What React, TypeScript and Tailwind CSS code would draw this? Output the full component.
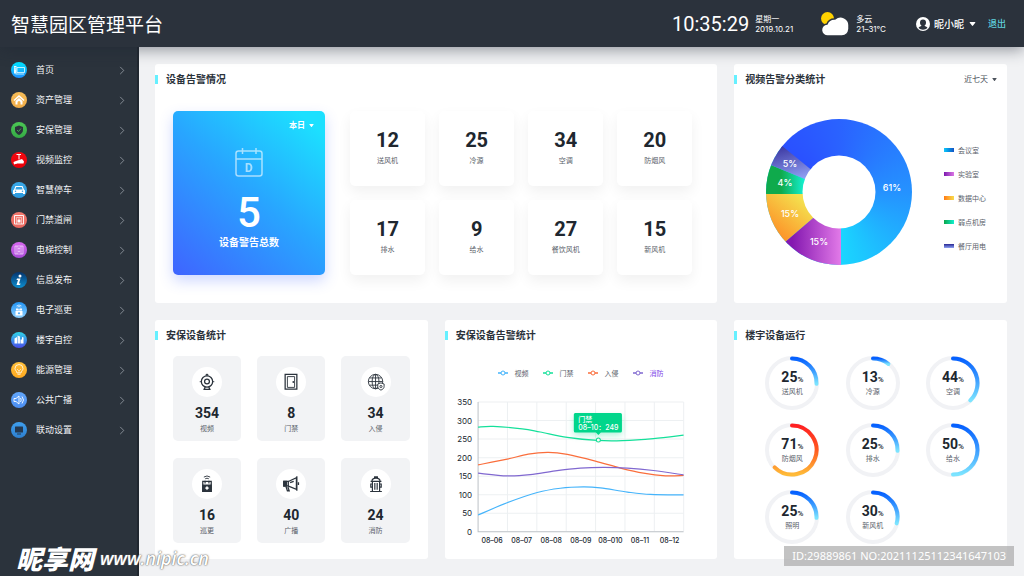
import React from "react";

type Point = [number, number];

// Rounded badge behind every sidebar glyph
function Badge({ id, from, to, children }: { id: string; from: string; to: string; children: React.ReactNode }) {
  return (
    <svg viewBox="0 0 32 32" className="size-4 shrink-0" aria-hidden="true">
      <defs>
        <linearGradient id={`badge-${id}`} x1="0" y1="0" x2="0" y2="1">
          <stop offset="0" stopColor={from} />
          <stop offset="1" stopColor={to} />
        </linearGradient>
      </defs>
      <circle cx="16" cy="16" r="16" fill={`url(#badge-${id})`} />
      {children}
    </svg>
  );
}

const menu = [
  {
    id: "home",
    label: "首页",
    from: "#00e5ff",
    to: "#1f8fff",
    icon: (
      <g fill="none" stroke="#e6fbff" strokeWidth="1.6">
        <path d="M12 11h15v10H12z" />
        <path d="M6 8h5v15H6z" fill="#e6fbff" stroke="none" />
        <path d="M7 11h3M7 14h3" stroke="#19c0ff" strokeWidth="1" />
        <path d="M9 24h17" />
      </g>
    ),
  },
  {
    id: "asset",
    label: "资产管理",
    from: "#f7bd58",
    to: "#f0ac48",
    icon: (
      <g fill="#fff">
        <path d="M16 6 5 16l2 2 9-8 9 8 2-2z" />
        <path d="M9 18l7-6 7 6v7h-4v-4a3 3 0 0 0-6 0v4H9z" />
      </g>
    ),
  },
  {
    id: "security",
    label: "安保管理",
    from: "#4cc755",
    to: "#35ab45",
    icon: (
      <g>
        <path d="M16 7l8 3v6c0 5-4 8-8 10-4-2-8-5-8-10v-6z" fill="#2b333c" />
        <path d="M12 16l3 3 5-6" fill="none" stroke="#4cc755" strokeWidth="1.6" />
      </g>
    ),
  },
  {
    id: "video",
    label: "视频监控",
    from: "#f40a12",
    to: "#e80009",
    icon: (
      <g fill="#fff">
        <path d="M11 4h9v2h-3v9h-2V6h-4z" />
        <path d="M10 18l12-4 4 5-1 4H10z" />
        <path d="M5 20l5-2 2 5-6 2z" />
      </g>
    ),
  },
  {
    id: "parking",
    label: "智慧停车",
    from: "#3aa9e8",
    to: "#2c98dc",
    icon: (
      <g>
        <path d="M9 8h14l3 7 2 2v7h-4v-2H8v2H4v-7l2-2z" fill="#fff" />
        <path d="M10.500 10h11l2 5h-15z" fill="#35a3e3" />
        <circle cx="9" cy="18.500" r="1.500" fill="#35a3e3" />
        <circle cx="23" cy="18.500" r="1.500" fill="#35a3e3" />
      </g>
    ),
  },
  {
    id: "gate",
    label: "门禁道闸",
    from: "#f2786d",
    to: "#e9685f",
    icon: (
      <g fill="none" stroke="#fff" strokeWidth="1.8">
        <path d="M7 7h18v17H7z" />
        <path d="M11 24V11h10v13" strokeWidth="1" />
        <path d="M13 16h6v5h-6z" fill="#fff" stroke="none" />
        <path d="M14.500 16v-2h3v2" strokeWidth="1.200" />
      </g>
    ),
  },
  {
    id: "lift",
    label: "电梯控制",
    from: "#d768ef",
    to: "#a84bd6",
    icon: (
      <g fill="none" stroke="#f5dcff" strokeWidth="1.5">
        <path d="M8 8h16v16H8zM12 8v16M20 8v16" />
        <path d="M14 14l2-3 2 3zM14 18l2 3 2-3z" />
      </g>
    ),
  },
  {
    id: "info",
    label: "信息发布",
    from: "#06356e",
    to: "#0d8fd0",
    icon: (
      <g fill="#fff">
        <circle cx="18" cy="8" r="3" />
        <path d="M12 13h7l-3 10h3l-1 3h-7l3-10h-3z" />
      </g>
    ),
  },
  {
    id: "patrol",
    label: "电子巡更",
    from: "#2194f3",
    to: "#8fd0ff",
    icon: (
      <g>
        <path d="M11 8q5-4 10 0M13 10q3-2 6 0" fill="none" stroke="#fff" strokeWidth="1.4" />
        <path d="M10 13h12v4H10zM9 18h14v9H9z" fill="#fff" />
        <path d="M15 12v3h2v-3zM16 20l2.500 2.500L16 25l-2.500-2.500z" fill="#45a6f6" />
      </g>
    ),
  },
  {
    id: "building",
    label: "楼宇自控",
    from: "#2fd6e8",
    to: "#4a4be8",
    icon: (
      <g fill="#fff">
        <path d="M7 13l5-3v13H7z" />
        <path d="M13 7l5 2v14h-5z" opacity=".9" />
        <path d="M19 15h3v8h-3z" />
        <path d="M22 10l3 1v12h-3z" />
      </g>
    ),
  },
  {
    id: "energy",
    label: "能源管理",
    from: "#ffc03c",
    to: "#ffa91f",
    icon: (
      <g fill="none" stroke="#fff" strokeWidth="1.6">
        <path d="M12 22c0-4-4-5-4-9a8 8 0 0 1 16 0c0 4-4 5-4 9z" />
        <path d="M12 14l4 4 4-4M16 18v4M13 25h6" strokeWidth="1.200" />
      </g>
    ),
  },
  {
    id: "radio",
    label: "公共广播",
    from: "#62a6fa",
    to: "#4a8df0",
    icon: (
      <g fill="none" stroke="#fff" strokeWidth="1.8">
        <path d="M6 13h4l6-5v16l-6-5H6z" />
        <path d="M19 12q3 4 0 8M22 9q6 7 0 14" />
      </g>
    ),
  },
  {
    id: "linkage",
    label: "联动设置",
    from: "#3f9fee",
    to: "#2d7fcf",
    icon: (
      <g fill="#25384f">
        <rect x="8" y="9" width="16" height="12" rx="1" />
        <path d="M12 23h8v2h-8z" />
      </g>
    ),
  },
];

const devices = [
  { value: 12, label: "送风机" },
  { value: 25, label: "冷源" },
  { value: 34, label: "空调" },
  { value: 20, label: "防烟风" },
  { value: 17, label: "排水" },
  { value: 9, label: "给水" },
  { value: 27, label: "餐饮风机" },
  { value: 15, label: "新风机" },
];

const securityDevices = [
  {
    value: 354,
    label: "视频",
    icon: (
      <g fill="none" stroke="#2b333c" strokeWidth="1.4">
        <circle cx="10" cy="9.500" r="6.300" />
        <circle cx="10" cy="9.500" r="2.700" />
        <path d="M8.500 2.800 10 1.500l1.500 1.300M3 9.500H2M18 9.500h-1M8 15.500l-1 2.500M12 15.500l1 2.500M6 18.200h8" />
      </g>
    ),
  },
  {
    value: 8,
    label: "门禁",
    icon: (
      <g fill="none" stroke="#2b333c">
        <path d="M3.500 1.500h13v16.500h-13z" strokeWidth="1.400" />
        <path d="M6 4h8v12H6z" strokeWidth="1" />
        <path d="M12.500 9v2" strokeWidth="1.400" />
      </g>
    ),
  },
  {
    value: 34,
    label: "入侵",
    icon: (
      <g fill="none" stroke="#2b333c" strokeWidth="1">
        <circle cx="9.500" cy="9.500" r="8" />
        <ellipse cx="9.500" cy="9.500" rx="3.800" ry="8" />
        <path d="M9.500 1.500v16M1.500 9.500h16M2.800 5.500h13.400M2.800 13.500h13.400" />
        <path d="M15.500 11l3.500 1.200v2.800c0 2-1.500 3.200-3.500 4-2-.8-3.500-2-3.500-4v-2.800z" fill="#fff" />
        <circle cx="15.500" cy="15" r="1.200" />
      </g>
    ),
  },
  {
    value: 16,
    label: "巡更",
    icon: (
      <g>
        <path d="M6.500 2.300q3.500-2.500 7 0M8 4.200q2-1.300 4 0" fill="none" stroke="#2b333c" strokeWidth="1" />
        <path d="M5.300 7.200h9.400v11H5.300z" fill="none" stroke="#2b333c" strokeWidth="1.400" />
        <path d="M4.600 10.500h10.800V19H4.600zM7.200 6.500h1.300v3H7.200zM11.500 6.500h1.300v3h-1.300z" fill="#2b333c" />
        <path d="M10 12l1 1.500 1.500 1-1.500 1L10 17l-1-1.500-1.500-1 1.500-1z" fill="#fff" />
      </g>
    ),
  },
  {
    value: 40,
    label: "广播",
    icon: (
      <g fill="none" stroke="#2b333c" strokeWidth="1.400">
        <path d="M6.500 7.500 16 3v13L6.500 12" />
        <path d="M2 7.200h5v5H2z" />
        <path d="M2 7h3v5.400H2z" fill="#2b333c" />
        <path d="M4.500 13l1.500 4.500h2L6.500 13M9 8.500l4-1.500M16.500 1.500v16M18.300 8v3" />
      </g>
    ),
  },
  {
    value: 24,
    label: "消防",
    icon: (
      <g fill="none" stroke="#2b333c" strokeWidth="1.300">
        <path d="M8.500 3.500V2h3v1.500M5.500 7c0-2 2-3.500 4.500-3.500s4.500 1.500 4.500 3.500zM4 7h12" />
        <path d="M6 7v11M14 7v11M8.700 9v7.500M11.300 9v7.500M3.500 18.300h13" />
        <path d="M6 10H4.200v3.500H6M14 10h1.800v3.500H14" />
      </g>
    ),
  },
];

const rings = [
  { value: 25, label: "送风机", sweep: 92, hot: false },
  { value: 13, label: "冷源", sweep: 39, hot: false },
  { value: 44, label: "空调", sweep: 135, hot: false },
  { value: 71, label: "防烟风", sweep: 225, hot: true },
  { value: 25, label: "排水", sweep: 92, hot: false },
  { value: 50, label: "给水", sweep: 180, hot: false },
  { value: 25, label: "照明", sweep: 92, hot: false },
  { value: 30, label: "新风机", sweep: 105, hot: false },
];

const pieLegend = [
  { label: "会议室", swatch: "bg-linear-to-r from-[#12c8fb] to-[#1552c4]" },
  { label: "实验室", swatch: "bg-linear-to-r from-[#7d14ae] to-[#dd74e4]" },
  { label: "数据中心", swatch: "bg-linear-to-r from-[#ff7a12] to-[#f6dc4c]" },
  { label: "弱点机房", swatch: "bg-linear-to-r from-[#0da648] to-[#14f0d0]" },
  { label: "餐厅用电", swatch: "bg-linear-to-b from-[#2b2492] to-[#93a4f4]" },
];

const series: { label: string; color: string; text: string; points: Point[] }[] = [
  {
    label: "视频",
    color: "#45b4fb",
    text: "text-[#5b626b]",
    points: [[33, 119.7], [62, 107.5], [92, 97.3], [115, 93], [138, 91.7], [155, 92.7], [182, 96.8], [205, 99.2], [238, 99.7]],
  },
  {
    label: "门禁",
    color: "#14e09a",
    text: "text-[#5b626b]",
    points: [[33, 32], [48, 31.3], [77, 33.7], [95, 36.9], [122, 42.2], [152, 45.3], [177, 45.5], [208, 43.5], [238, 40]],
  },
  {
    label: "入侵",
    color: "#fa6e3c",
    text: "text-[#5b626b]",
    points: [[33, 69.7], [62, 64], [83, 59], [103, 57.3], [122, 59.3], [150, 65.9], [175, 72.9], [198, 78], [220, 80.6], [238, 80.3]],
  },
  {
    label: "消防",
    color: "#8068d0",
    text: "text-[#7d45e8]",
    points: [[33, 78], [62, 80.7], [85, 79.5], [110, 75.7], [135, 73], [158, 72.2], [182, 72.9], [208, 75.3], [238, 79.7]],
  },
];

const days = ["08–06", "08–07", "08–08", "08–09", "08–010", "08–11", "08–12"];

// Catmull-Rom spline turned into cubic beziers
function smooth(points: Point[]) {
  let d = `M${points[0][0]} ${points[0][1]}`;
  for (let i = 0; i < points.length - 1; i++) {
    const p0 = points[i - 1] ?? points[i];
    const p1 = points[i];
    const p2 = points[i + 1];
    const p3 = points[i + 2] ?? p2;
    d += `C${p1[0] + (p2[0] - p0[0]) / 6} ${p1[1] + (p2[1] - p0[1]) / 6} ${p2[0] - (p3[0] - p1[0]) / 6} ${p2[1] - (p3[1] - p1[1]) / 6} ${p2[0]} ${p2[1]}`;
  }
  return d;
}

function Caret({ className }: { className: string }) {
  return (
    <svg viewBox="0 0 8 5" className={className} aria-hidden="true">
      <path d="M1 0h6q1 0 .4.800L4.700 4.500q-.7.700-1.400 0L.6.800Q0 0 1 0z" fill="currentColor" />
    </svg>
  );
}

function Panel({ title, extra, className = "", children }: { title: string; extra?: React.ReactNode; className?: string; children: React.ReactNode }) {
  return (
    <section className={`rounded-[3px] bg-white ${className}`}>
      <div className="flex h-[30px] items-center">
        <span className="h-[9px] w-[3px] bg-[#66f0ff]" />
        <h2 className="ml-2 text-[10px] leading-4 font-bold text-[#2b323b]">{title}</h2>
        {extra}
      </div>
      {children}
    </section>
  );
}

function Header() {
  return (
    <header className="relative z-10 flex h-[47px] items-center bg-[#2b323c] pr-[18px] pl-[11px] text-white shadow-[0_3px_14px_rgba(30,38,50,0.45)]">
      <h1 className="text-[19px] leading-7">智慧园区管理平台</h1>
      <time className="ml-auto font-['Roboto',sans-serif] text-[20px] leading-6">10:35:29</time>
      <div className="ml-[6px] text-[8px] leading-[10px]">
        <p>星期一</p>
        <p className="font-['Inter',sans-serif]">2019.10.21</p>
      </div>
      <svg viewBox="0 0 28 24" className="ml-7 h-6 w-7" aria-hidden="true">
        <circle cx="6.500" cy="6.500" r="6.500" fill="#ffd200" />
        <path d="M7 24a6 6 0 0 1-1-12 8 8 0 0 1 8-5 8.500 8.500 0 0 1 14 7v3a8 8 0 0 1-7 7z" fill="#fff" stroke="#2b323c" strokeWidth="1.500" />
      </svg>
      <div className="ml-[7px] text-[8px] leading-[10px]">
        <p>多云</p>
        <p className="font-['Inter','Noto_Sans_CJK_SC',sans-serif]">21–31℃</p>
      </div>
      <button type="button" className="ml-[30px] flex items-center text-[10px] leading-4 font-medium">
        <svg viewBox="0 0 28 28" className="mr-1 size-[14px]" aria-hidden="true">
          <circle cx="14" cy="14" r="14" fill="#fff" />
          <path d="M14 5a6 6 0 0 1 6 6c0 3-1 5-3 6 0 2 5 2 6 5a13 13 0 0 1-18 0c1-3 6-3 6-5-2-1-3-3-3-6a6 6 0 0 1 6-6z" fill="#2b323c" />
        </svg>
        昵小昵
        <Caret className="ml-[5px] h-1 w-[7px]" />
      </button>
      <a href="#logout" className="ml-3 text-[9px] leading-4 font-medium text-[#5fd0dc]">
        退出
      </a>
    </header>
  );
}

function Sidebar() {
  return (
    <nav className="w-[139px] shrink-0 border-r-2 border-[#20272f] bg-[#2b333c] pt-2">
      <ul>
        {menu.map((item) => (
          <li key={item.id}>
            <a href={`#${item.id}`} className="flex h-[30px] items-center pr-3 pl-[11px] text-[9px] text-[#f2f4f6]">
              <Badge id={item.id} from={item.from} to={item.to}>
                {item.icon}
              </Badge>
              <span className="ml-[9px]">{item.label}</span>
              <svg viewBox="0 0 6 10" className="ml-auto h-[9px] w-[6px]" aria-hidden="true">
                <path d="M1 1l4 4-4 4" fill="none" stroke="#8f969e" strokeWidth="1" />
              </svg>
            </a>
          </li>
        ))}
      </ul>
    </nav>
  );
}

function AlarmPanel() {
  return (
    <Panel title="设备告警情况" className="col-span-2">
      <div className="flex gap-[25px] pt-[17px] pr-[25px] pb-7 pl-[18px]">
        <div className="flex w-[152px] flex-col items-center rounded-[5px] bg-linear-[40deg,#3f64ff,#28a6ff_52%,#1ce0ff_92%] pt-2 text-white shadow-[0_6px_14px_rgba(63,98,255,0.25)]">
          <label className="mr-[11px] flex items-center self-end">
            <select aria-label="统计时间" className="appearance-none text-[8px] leading-3 font-bold">
              <option>本日</option>
            </select>
            <Caret className="ml-1 h-[3px] w-[5px]" />
          </label>
          <svg viewBox="0 0 28 29" className="mt-[17px] h-[29px] w-7 opacity-60" aria-hidden="true">
            <g fill="none" stroke="#fff" strokeWidth="1.500">
              <rect x="1" y="3" width="26" height="25" rx="2.500" />
              <path d="M1 11h26M7.500 0v6M21 0v6" />
            </g>
            <text x="14" y="23.500" textAnchor="middle" fill="#fff" className="font-['Roboto',sans-serif] text-[12px] font-bold">
              D
            </text>
          </svg>
          <strong className="mt-4 font-['Roboto',sans-serif] text-[42px] leading-10 font-medium">5</strong>
          <p className="mt-[1px] text-[10px] leading-4 font-bold">设备警告总数</p>
        </div>
        <ul className="grid flex-1 grid-cols-4 gap-[14px]">
          {devices.map((d) => (
            <li key={d.label} className="flex h-[75px] flex-col items-center rounded-[5px] bg-white pt-[17px] shadow-[0_6px_14px_rgba(0,0,0,0.06)]">
              <strong className="font-['Roboto',sans-serif] text-[20px] leading-6 font-bold text-[#20272f]">{d.value}</strong>
              <span className="mt-[3px] text-[7px] leading-[10px] text-[#5b626b]">{d.label}</span>
            </li>
          ))}
        </ul>
      </div>
    </Panel>
  );
}

function PiePanel() {
  return (
    <Panel
      title="视频告警分类统计"
      extra={
        <label className="mr-[10px] ml-auto flex items-center text-[#4b525b]">
          <select aria-label="时间范围" className="appearance-none text-[8px] leading-3">
            <option>近七天</option>
          </select>
          <Caret className="ml-1 h-[3px] w-[5px]" />
        </label>
      }
    >
      <div className="flex items-center justify-between pt-[25px] pr-[21px] pl-8">
        <div className="size-[146px] rounded-full bg-[conic-gradient(from_308deg_at_75px_75px,#2a50ff,#2a62ff_50deg,#2592ff_140deg,#1ad6ff_232deg)]">
          <svg viewBox="0 0 146 146" className="size-full rounded-full">
            <defs>
              <linearGradient id="pie-purple" x1="0" y1="0" x2="1" y2="0">
                <stop offset=".35" stopColor="#8418b0" />
                <stop offset="1" stopColor="#e27ae8" />
              </linearGradient>
              <linearGradient id="pie-orange" x1="0" y1="1" x2="1" y2="0">
                <stop offset=".15" stopColor="#ff8120" />
                <stop offset=".7" stopColor="#f4e04e" />
              </linearGradient>
              <linearGradient id="pie-green" x1="0" y1="0" x2="1" y2="0">
                <stop offset=".2" stopColor="#0faa4c" />
                <stop offset=".52" stopColor="#14f2d4" />
              </linearGradient>
              <linearGradient id="pie-indigo" x1=".1" y1="0" x2=".4" y2=".8">
                <stop offset="0" stopColor="#2b2492" />
                <stop offset="1" stopColor="#98a8fa" />
              </linearGradient>
            </defs>
            <path d="M75 75V150H0L19 123z" fill="url(#pie-purple)" />
            <path d="M75 75 19 123 0 139V75z" fill="url(#pie-orange)" />
            <path d="M75 75H0V44z" fill="url(#pie-green)" />
            <path d="M75 75 0 44 10 22z" fill="url(#pie-indigo)" />
            <circle cx="73" cy="73" r="36.500" fill="#fff" />
            <g fill="#fff" textAnchor="middle" className="font-['Inter',sans-serif] text-[9px] font-medium">
              <text x="126" y="72">61%</text>
              <text x="24" y="48">5%</text>
              <text x="19" y="67">4%</text>
              <text x="24" y="98">15%</text>
              <text x="53" y="126">15%</text>
            </g>
          </svg>
        </div>
        <ul className="mt-3 flex flex-col gap-[14px]">
          {pieLegend.map((item) => (
            <li key={item.label} className="flex items-center text-[7px] leading-[10px] text-[#5b626b]">
              <span className={`mr-1 h-1 w-[10px] ${item.swatch}`} />
              {item.label}
            </li>
          ))}
        </ul>
      </div>
    </Panel>
  );
}

function SecurityPanel() {
  return (
    <Panel title="安保设备统计">
      <ul className="grid grid-cols-3 gap-x-4 gap-y-[17px] pt-[6px] pr-[18px] pb-4 pl-[18px]">
        {securityDevices.map((d) => (
          <li key={d.label} className="flex h-[85px] flex-col items-center rounded-[5px] bg-[#f2f3f5] pt-[11px]">
            <span className="flex size-[30px] items-center justify-center rounded-full bg-white">
              <svg viewBox="0 0 20 20" className="size-[18px]" aria-hidden="true">
                {d.icon}
              </svg>
            </span>
            <strong className="mt-2 font-['Roboto',sans-serif] text-[14px] leading-4 font-bold text-[#20272f]">{d.value}</strong>
            <span className="mt-[2px] text-[7px] leading-[10px] text-[#5b626b]">{d.label}</span>
          </li>
        ))}
      </ul>
    </Panel>
  );
}

function TrendPanel() {
  return (
    <Panel title="安保设备告警统计">
      <ul className="flex justify-center gap-[15px] pt-[18px]">
        {series.map((s) => (
          <li key={s.label} className={`flex items-center text-[7px] leading-[10px] ${s.text}`}>
            <svg viewBox="0 0 10 6" className="mr-[6px] h-[6px] w-[10px]" aria-hidden="true">
              <path d="M0 3h10" stroke={s.color} strokeWidth="1.500" />
              <circle cx="5" cy="3" r="2" fill="#fff" stroke={s.color} />
            </svg>
            {s.label}
          </li>
        ))}
      </ul>
      <svg viewBox="0 0 272 152" className="mt-[17px] w-full font-['Inter','Noto_Sans_CJK_SC',sans-serif] text-[7px]">
        <g stroke="#edf0f2">
          {[0, 1, 2, 3, 4, 5, 6].map((i) => (
            <path key={i} d={`M33 ${7 + i * 18.5}H238`} />
          ))}
          {[1, 2, 3, 4, 5, 6, 7].map((i) => (
            <path key={i} d={`M${33 + i * 29.3} 7V136`} />
          ))}
        </g>
        <path d="M33 7V136.500H238" fill="none" stroke="#bcc1c6" />
        <g fill="#20272f" textAnchor="end" className="text-[8px]">
          {[350, 300, 250, 200, 150, 100, 50, 0].map((v, i) => (
            <text key={v} x="27" y={10 + i * 18.5}>
              {v}
            </text>
          ))}
        </g>
        <g fill="#20272f" textAnchor="middle" className="font-medium">
          {days.map((day, i) => (
            <text key={day} x={47 + i * 29.5} y="148">
              {day}
            </text>
          ))}
        </g>
        {series.map((s) => (
          <path key={s.label} d={smooth(s.points)} fill="none" stroke={s.color} strokeWidth="1.200" />
        ))}
        <circle cx="153" cy="45" r="2" fill="#fff" stroke="#14dc93" />
        <path d="M130 18h45q1.500 0 1.500 1.500V36q0 1.500-1.500 1.500h-19.500L153 40l-2.500-2.500H130q-1.500 0-1.500-1.500V19.500q0-1.500 1.500-1.500z" fill="#00d68b" className="drop-shadow-[0_3px_3px_rgba(0,214,139,0.3)]" />
        <g fill="#fff" className="font-medium">
          <text x="133" y="27">
            门禁
          </text>
          <text x="133" y="35">
            08–10：249
          </text>
        </g>
      </svg>
    </Panel>
  );
}

function RunningPanel() {
  return (
    <Panel title="楼宇设备运行">
      <ul className="grid grid-cols-[repeat(3,auto)] justify-between gap-y-[13px] pt-[6px] pr-[27px] pl-[31px]">
        {rings.map((r) => {
          const end = (r.sweep * Math.PI) / 180;
          const d = `M27 2.5A24.500 24.500 0 ${r.sweep > 180 ? 1 : 0} 1 ${27 + 24.5 * Math.sin(end)} ${27 - 24.5 * Math.cos(end)}`;
          return (
            <li key={r.label} className="grid size-[54px] place-items-center">
              <svg viewBox="0 0 54 54" className="size-[54px] [grid-area:1/1]" aria-hidden="true">
                <defs>
                  <linearGradient id={`ring-${r.label}`} x1="0" y1="0" x2="0" y2="1">
                    <stop offset="0" stopColor={r.hot ? "#ff1f22" : "#0560ff"} />
                    <stop offset=".5" stopColor={r.hot ? "#ff5a20" : "#3c9cff"} />
                    <stop offset="1" stopColor={r.hot ? "#ffbb38" : "#7ce4ff"} />
                  </linearGradient>
                </defs>
                <circle cx="27" cy="27" r="25" fill="none" stroke="#f1f2f5" strokeWidth="4" />
                <path d={d} fill="none" stroke={`url(#ring-${r.label})`} strokeWidth="4" strokeLinecap="round" />
              </svg>
              <div className="text-center [grid-area:1/1]">
                <p className="font-['Roboto',sans-serif] text-[14px] leading-[14px] font-bold text-[#20272f]">
                  {r.value}
                  <span className="text-[8px] font-medium">%</span>
                </p>
                <p className="text-[7px] leading-[9px] text-[#5b626b]">{r.label}</p>
              </div>
            </li>
          );
        })}
      </ul>
    </Panel>
  );
}

export default function App() {
  return (
    <div className="relative flex min-h-screen flex-col bg-[#f1f2f4] font-['Noto_Sans_CJK_SC',sans-serif]">
      <Header />
      <div className="flex flex-1">
        <Sidebar />
        <main className="grid min-w-0 flex-1 grid-cols-3 content-start gap-[17px] pt-[17px] pr-[17px] pb-[17px] pl-4">
          <AlarmPanel />
          <PiePanel />
          <SecurityPanel />
          <TrendPanel />
          <RunningPanel />
        </main>
      </div>
      <div className="absolute bottom-1 left-4 flex items-center gap-[6px] text-white italic">
        <span className="text-[26px] leading-7 font-black">昵享网</span>
        <span className="font-['Open_Sans',sans-serif] text-[18px] leading-6 font-semibold [text-shadow:0_0_2px_#555,0_0_1px_#777]">www.nipic.cn</span>
      </div>
      <p className="absolute right-[10px] bottom-[10px] bg-[#a9a9a9]/70 px-2 font-['Noto_Sans',sans-serif] text-[11px] leading-5 text-white">
        ID:29889861 NO:20211125112341647103
      </p>
    </div>
  );
}
